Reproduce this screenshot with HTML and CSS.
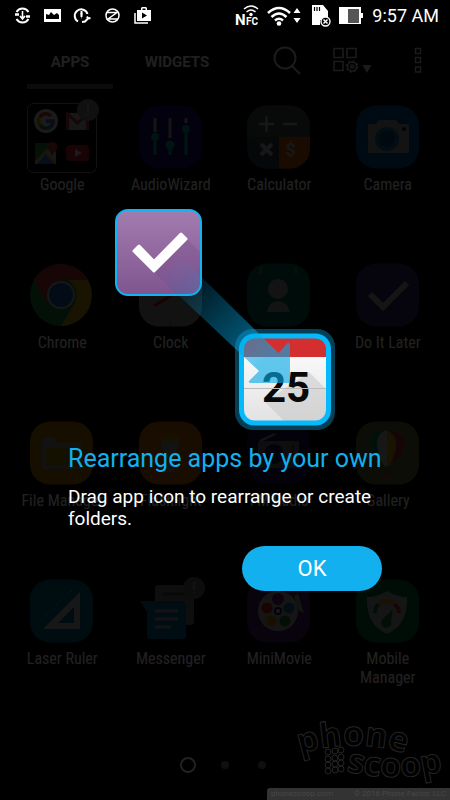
FILE: index.html
```html
<!DOCTYPE html>
<html lang="en">
<head>
<meta charset="utf-8">
<meta name="viewport" content="width=device-width, initial-scale=1">
<title>Apps</title>
<link rel="stylesheet" href="styles.css">
</head>
<body>
<div class="phone">
  <header class="status">
    <div class="status-left">
      <svg width="20" height="20" viewBox="0 0 20 20" fill="none" stroke="#fff" stroke-width="2"><path d="M4.500 6a7 7 0 0 1 12 0M16.500 13a7 7 0 0 1-12 0"/><path d="M10.500 5v8M8 10l2.500 3 2.500-3" stroke-width="1.600"/><path d="M3 8.500h4M14 10.500h4" stroke-width="2.500"/></svg>
      <svg width="20" height="20" viewBox="0 0 20 20"><path fill="#fff" fill-rule="evenodd" d="M2 3h17v13H2zM4 13h13V9l-2-2-3 2-3-3-2 3-3-1z"/></svg>
      <svg width="20" height="20" viewBox="0 0 20 20" fill="none" stroke="#fff" stroke-width="2"><path d="M6 15.500A6.500 6.500 0 1 1 15.500 8M9.500 5v6M10 16l3-.5 3-3M15 10.500l1 2 2.500-.5"/><path d="M8.500 7h2l-1 6z" fill="#fff" stroke="none"/></svg>
      <svg width="20" height="20" viewBox="0 0 20 20" fill="none" stroke="#fff" stroke-width="1.500"><circle cx="10.500" cy="9.500" r="6.500"/><path d="M5 6.500h10L6 13h10"/></svg>
      <svg width="20" height="20" viewBox="0 0 20 20"><path fill="#fff" fill-rule="evenodd" d="M5 4h4V2l1-1h4l1 1v2h4v11H5zM10.500 4h3V2.500h-3zM10 6.500v6l5-3z"/><path d="M3 7v10h13" fill="none" stroke="#fff" stroke-width="1.500"/></svg>
    </div>
    <div class="status-right">
      <svg width="24" height="24" viewBox="0 0 24 24"><text x="0" y="21" class="nfc-n">N</text><text x="11" y="21" class="nfc-fc">FC</text><g fill="none" stroke="#fff" stroke-width="1.500"><path d="M9 5q7-6 14 0M11.500 8q4.500-4 9 0"/></g><circle cx="16" cy="10.500" r="1.700" fill="#fff"/></svg>
      <svg width="36" height="24" viewBox="0 0 36 24"><g fill="none" stroke="#fff" stroke-width="2.500"><path d="M1 9q11-10 22 0M4.500 13q7.500-7 15 0M8 16.500q4-3.500 8 0"/></g><circle cx="12" cy="19.500" r="2.300" fill="#fff"/><path fill="#fff" d="m30 4 3.500 5h-7zM26.500 14h7L30 19z"/></svg>
      <svg width="20" height="24" viewBox="0 0 20 24"><path fill="#fff" d="M1 1h11l5 6v9H9v5H1z"/><path stroke="#000" stroke-width="1.200" d="M3.500 3v4M6 3v4M8.500 3v4"/><circle cx="14.500" cy="17.500" r="4.500" fill="#000" stroke="#fff" stroke-width="1.400"/><path stroke="#fff" stroke-width="1.500" d="m12.500 15.500 4 4m0-4-4 4"/></svg>
      <svg width="25" height="24" viewBox="0 0 25 24"><path fill="#fff" d="M0 3h22v6h2v5h-2v6H0z"/><path fill="#555" d="M9 5h11v14H9z"/></svg>
      <span class="time">9:57 AM</span>
    </div>
  </header>

  <div class="bar">
    <nav class="tabs">
      <a class="tab tab-on" href="#apps">APPS</a>
      <a class="tab" href="#widgets">WIDGETS</a>
    </nav>
    <div class="tools">
      <button class="tool" type="button" aria-label="Search"><svg width="30" height="30" viewBox="0 0 30 30" fill="none" stroke="#fff" stroke-width="2"><circle cx="13" cy="12" r="10.500"/><path d="m20 20 8 8"/></svg></button>
      <button class="tool" type="button" aria-label="Layout"><svg width="41" height="30" viewBox="0 0 41 30" fill="none" stroke="#fff" stroke-width="1.600"><path d="M2 2.500h9v9H2zM15 2.500h9v9h-9zM2 15.500h9v9H2z"/><circle cx="20" cy="20.500" r="4.500"/><circle cx="20" cy="20.500" r="1.500"/><circle cx="20" cy="20.500" r="5.500" stroke-dasharray="2 2.320"/><path fill="#fff" stroke="none" d="M30.500 19h9L35 27z"/></svg></button>
      <button class="tool" type="button" aria-label="More"><svg width="10" height="30" viewBox="0 0 10 30" fill="none" stroke="#fff" stroke-width="1.500"><path d="M2.500 2.500h5v5h-5zM2.500 11.500h5v5h-5zM2.500 21h5v5h-5z"/></svg></button>
    </div>
  </div>

  <main class="grid" id="apps">
    <button class="app" type="button"><svg class="icon" viewBox="0 0 64 64"><rect x="-2.500" y="-1.500" width="69" height="69" rx="6" fill="none" stroke="#aaa"/><circle cx="16" cy="16" r="12" fill="#fff"/><g fill="none" stroke-width="3.500"><path stroke="#ea4335" d="M10 12a7 7 0 0 1 11-1"/><path stroke="#fbbc05" d="M10 12a7 7 0 0 0 0 8"/><path stroke="#34a853" d="M10 20a7 7 0 0 0 10 2"/><path stroke="#4285f4" d="M20 22q3-2 3-6h-7"/></g><rect x="36" y="8" width="23" height="17" rx="1" fill="#ddd"/><path d="M37.500 25V9l10 9 10-9v16" fill="none" stroke="#e53935" stroke-width="3"/><path fill="#34a853" d="M5 38h21v21H5z"/><path fill="#ddd" d="m5 56 14-15 7 7v11H5z"/><path fill="#4285f4" d="m7 59 9-10 9 10z"/><path stroke="#fbc02d" stroke-width="2" d="m5 57 18-18m-8 9 11 11"/><path fill="#ea4335" d="M22 53q0-5-4-9a5 5 0 1 1 9 0q-5 4-5 9"/><rect x="36" y="40" width="23" height="16" rx="4" fill="#e52d27"/><path fill="#fff" d="m45 44 7 4-7 4z"/><circle cx="58" cy="5" r="11" fill="#999"/><path d="M58-1v8m0 2v2" stroke="#ddd" stroke-width="1.500"/></svg><span class="label">Google</span></button>
    <button class="app" type="button"><svg class="icon" viewBox="0 0 64 64"><rect width="63" height="63" y=".5" rx="20" fill="#1c127d"/><g stroke-width="3"><path stroke="#ccc" d="M16 13v14M31 13v20M47 13v5"/><path stroke="#00bfa5" d="M16 31v19M31 42v8M47 25v25"/></g><g fill="#00bfa5"><circle cx="16" cy="32" r="4"/><circle cx="31" cy="40" r="4.500"/><circle cx="47" cy="24" r="4"/></g></svg><span class="label">AudioWizard</span></button>
    <button class="app" type="button"><svg class="icon" viewBox="0 0 64 64"><defs><clipPath id="tile"><rect width="63" height="63" y=".5" rx="20"/></clipPath></defs><g clip-path="url(#tile)"><path fill="#536064" d="M0 0h64v64H0z"/><path fill="#ef6c00" d="M32 32h32v32H32z"/><path fill="#3f4b50" d="M0 32h32v32H0z"/></g><path stroke="#ddd" stroke-width="2.600" d="M12 19h15m-7.500-7.500v15M36 19h14"/><path stroke="#ddd" stroke-width="4" d="m14 39 11 11m0-11L14 50"/><text x="38" y="51" class="dollar">$</text></svg><span class="label">Calculator</span></button>
    <button class="app" type="button"><svg class="icon" viewBox="0 0 64 64"><rect width="63" height="63" y=".5" rx="20" fill="#0864af"/><path fill="#bbb" d="M12 19h8l3-4h17l3 4h8q2 0 2 2v27H12V21z"/><circle cx="31" cy="34" r="12" fill="#1782bd"/><circle cx="31" cy="34" r="8" fill="#07549b"/><circle cx="48" cy="24" r="2" fill="#123"/></svg><span class="label">Camera</span></button>

    <button class="app" type="button"><svg class="icon" viewBox="0 0 64 64"><circle cx="31" cy="32" r="31" fill="#179b4a"/><path fill="#dc3c31" d="M4 17a31 31 0 0 1 54 0H31L17 40z"/><path fill="#e9bd12" d="M58 17a31 31 0 0 1-27 46l14-23q5-15-7-23z"/><circle cx="31" cy="32" r="14" fill="#ddd"/><circle cx="31" cy="32" r="12" fill="#2670d5"/></svg><span class="label">Chrome</span></button>
    <button class="app" type="button"><svg class="icon" viewBox="0 0 64 64"><rect width="63" height="63" y=".5" rx="20" fill="#aab3b0"/><path stroke="#f20b24" stroke-width="3" d="m15 43 18-11"/><path stroke="#777" d="M31 58v5M0 32h3M60 32h3"/></svg><span class="label">Clock</span></button>
    <button class="app" type="button"><svg class="icon" viewBox="0 0 64 64"><rect width="63" height="63" y=".5" rx="20" fill="#08745e"/><path stroke="#499783" stroke-width="3" d="M14 4v7M49 4v7"/><circle cx="31" cy="26" r="10" fill="#bbb"/><path fill="#bbb" d="M20 49q2-11 11-11t12 11z"/></svg><span class="label">Contacts</span></button>
    <button class="app" type="button"><svg class="icon" viewBox="0 0 64 64"><rect width="63" height="63" y=".5" rx="20" fill="#3b2e72"/><path fill="none" stroke="#ccc" stroke-width="6" d="m14 31 13 13 24-24"/></svg><span class="label">Do It Later</span></button>

    <button class="app" type="button"><svg class="icon" viewBox="0 0 64 64"><rect width="63" height="63" y=".5" rx="20" fill="#d79200"/><path fill="#aaa" d="M12 18q0-2 2-2h10l3 6h22q2 0 2 2v24H14q-2 0-2-2z"/><path fill="#c5a90b" d="M16 27h33v18H16z"/></svg><span class="label">File Manager</span></button>
    <button class="app" type="button"><svg class="icon" viewBox="0 0 64 64"><rect width="63" height="63" y=".5" rx="20" fill="#e87b00"/><path fill="#ddaf00" d="M22 14h19v6H22z"/><path fill="#bbb" d="M22 20h19q-1 8-5 11v20H26V31q-4-4-4-11"/></svg><span class="label">Flashlight</span></button>
    <button class="app" type="button"><svg class="icon" viewBox="0 0 64 64"><rect width="63" height="63" y=".5" rx="20" fill="#24176a"/><path stroke="#bbb" stroke-width="2" d="m13 20 15-7"/><rect x="11" y="20" width="41" height="27" rx="2" fill="#888"/><circle cx="27" cy="33" r="10" fill="#26205e"/><path stroke="#d22" stroke-width="2" d="M46 24v13"/></svg><span class="label">FM Radio</span></button>
    <button class="app" type="button"><svg class="icon" viewBox="0 0 64 64"><rect width="63" height="63" y=".5" rx="20" fill="#817f45"/><path fill="#06a66c" d="M31 10c-23-2-21 20-3 34-9-22-7-28 3-34"/><path fill="#ddd" d="M31 9c-16 5-9 25-3 36h3z"/><path fill="#f1c400" d="M31 9c13 5 12 25 3 36h-3z"/><path fill="#d62e42" d="M31 9c26 1 19 25 3 35 10-20 8-28-3-35"/><path fill="#a75a16" d="M27 50h8v6h-8z"/></svg><span class="label">Gallery</span></button>

    <button class="app" type="button"><svg class="icon" viewBox="0 0 64 64"><rect width="63" height="63" y=".5" rx="20" fill="#087d9b"/><path fill="#ddd" fill-rule="evenodd" d="M50 13v37H13zm-6 15v16H28z"/><path stroke="#25b3d4" stroke-width="2" stroke-dasharray="2 3" d="m12 41 31-31"/></svg><span class="label">Laser Ruler</span></button>
    <button class="app" type="button"><svg class="icon" viewBox="0 0 64 64"><rect x="16" y="6" width="39" height="40" rx="3" fill="#888"/><path stroke="#555" stroke-width="3" d="M24 15h24"/><path fill="#087eb9" d="M1 22h42q4 0 4 4v31q0 3-4 3H12q-4 0-4-3V33z"/><path stroke="#bbb" stroke-width="3" d="M16 32h23M16 40h23M16 48h16"/><circle cx="55" cy="9" r="11" fill="#777"/><path d="M55 3v8m0 2v2" stroke="#ccc" stroke-width="1.500"/></svg><span class="label">Messenger</span></button>
    <button class="app" type="button"><svg class="icon" viewBox="0 0 64 64"><rect width="63" height="63" y=".5" rx="20" fill="#541d72"/><path fill="#bbb" d="m47 17 4-2 6 19-5-2z"/><circle cx="31" cy="32" r="20" fill="#ccc"/><circle cx="31" cy="20" r="6" fill="#8b238e"/><circle cx="20" cy="29" r="5.500" fill="#dd2e23"/><circle cx="42" cy="29" r="5.500" fill="#1786c5"/><circle cx="24" cy="42" r="5.500" fill="#e99c0c"/><circle cx="38" cy="42" r="5.500" fill="#21963c"/><circle cx="31" cy="32" r="3" fill="#eee" stroke="#1c1c63" stroke-width="2"/></svg><span class="label">MiniMovie</span></button>
    <button class="app" type="button"><svg class="icon" viewBox="0 0 64 64"><rect width="63" height="63" y=".5" rx="20" fill="#087c3c"/><path fill="#ccc" d="M31 12q10 6 20 6 1 28-20 37Q10 46 11 18q10 0 20-6"/><g fill="none" stroke-width="4"><path stroke="#16964d" d="M19 34q0-6 4-9"/><path stroke="#edac12" d="M24 24q7-4 13 0"/><path stroke="#e53935" d="M38 25q5 3 5 9"/></g><path fill="#16964d" d="m37 30-2 12a5 5 0 1 1-8-2z"/></svg><span class="label">Mobile Manager</span></button>
  </main>

  <nav class="pages" aria-label="Pages">
    <span class="page page-on"></span><span class="page"></span><span class="page"></span>
  </nav>

  <section class="tip" role="dialog" aria-labelledby="tip-title">
    <svg class="drag" width="220" height="222" viewBox="0 0 220 222" aria-hidden="true">
      <defs>
        <linearGradient id="purple" x2="0" y2="1"><stop stop-color="#a37caf"/><stop offset="1" stop-color="#7f558f"/></linearGradient>
        <linearGradient id="beam" gradientUnits="userSpaceOnUse" x1="55" y1="55" x2="150" y2="150"><stop stop-color="#04a9e6" stop-opacity="0"/><stop offset="1" stop-color="#04a9e6" stop-opacity=".62"/></linearGradient>
        <linearGradient id="paper" x2="0" y2="1"><stop stop-color="#fff"/><stop offset="1" stop-color="#e2e2e2"/></linearGradient>
        <clipPath id="cal"><rect x="128" y="129" width="84" height="84" rx="10"/></clipPath>
        <clipPath id="task"><rect x="1" y="1" width="85" height="85" rx="12"/></clipPath>
      </defs>
      <rect x="1" y="1" width="85" height="85" rx="12" fill="url(#purple)"/>
      <path clip-path="url(#task)" fill="#704583" opacity=".25" d="m39 63 33-33 20 20v40H66z"/>
      <rect x="1" y="1" width="85" height="85" rx="12" fill="none" stroke="#12b3f2" stroke-width="2"/>
      <rect x="120" y="120" width="100" height="101" rx="18" fill="#043f58"/>
      <g clip-path="url(#cal)">
        <path fill="url(#paper)" d="M128 129h84v84h-84z"/>
        <path fill="#d32f2f" d="M128 129h84v19h-84z"/>
        <path fill="#bbb" opacity=".4" d="m194 163 20 20v32h-42l-22-22z"/>
        <text x="147" y="193" class="day">25</text>
        <path stroke="#bbb" d="M128 179.500h84"/>
      </g>
      <rect x="126.500" y="127" width="87" height="87" rx="13" fill="none" stroke="#05b9fa" stroke-width="5"/>
      <path fill="url(#beam)" d="M39 63 62 44 163.500 144l9-10q2-1 2.500 2v38h-39q-3 0-2-2l10-10z"/>
      <path fill="#fff" stroke="#fff" stroke-width="3" stroke-linejoin="round" d="m19 42 5-5 15 15.500L66 25l5 5-32 32z"/>
    </svg>
    <div class="tip-text">
      <h1 class="tip-title" id="tip-title">Rearrange apps by your own</h1>
      <p class="tip-body">Drag app icon to rearrange or create folders.</p>
      <button class="ok" type="button">OK</button>
    </div>
  </section>

  <footer class="credit">
    <svg class="mark" width="148" height="68" viewBox="0 0 148 68">
      <defs><path id="arc-a" d="M-2 38Q52 20 112 40"/><path id="arc-b" d="M44 55Q95 68 150 53"/></defs>
      <g class="mark-text"><text><textPath href="#arc-a">phone</textPath></text><text><textPath href="#arc-b">scoop</textPath></text></g>
      <g fill="none" stroke="#242424"><circle cx="26" cy="36" r="3"/><circle cx="33" cy="35" r="3"/><circle cx="39" cy="34" r="3"/><circle cx="26" cy="43" r="3"/><circle cx="33" cy="42" r="3"/><circle cx="39" cy="41" r="3"/><circle cx="26" cy="49" r="3"/><circle cx="33" cy="48" r="3"/><circle cx="39" cy="47" r="3"/><circle cx="26" cy="55" r="3"/><circle cx="33" cy="54" r="3"/><circle cx="39" cy="53" r="3"/></g>
    </svg>
    <small class="legal"><span>phonescoop.com</span><span>© 2016 Phone Factor, LLC</span></small>
  </footer>
</div>
</body>
</html>
```
FILE: styles.css
```css
* { box-sizing: border-box; }
body { margin: 0; background: #000; color: #fff; font-family: Roboto, "Noto Sans", sans-serif; }
button { margin: 0; padding: 0; border: 0; background: none; color: inherit; font: inherit; }
svg { display: block; flex: none; }

.phone { position: relative; min-height: 100vh; overflow: hidden; }

.status { position: relative; z-index: 2; display: flex; justify-content: space-between; align-items: center; height: 32px; padding: 0 11px 0 12px; }
.status-left { display: flex; gap: 10px; }
.status-right { display: flex; align-items: center; gap: 8px; }
.time { font-size: 18px; line-height: 24px; }
.nfc-n { font: 700 15px Roboto, sans-serif; fill: #fff; }
.nfc-fc { font: 700 10px Roboto, sans-serif; fill: #fff; }

.bar { display: flex; justify-content: space-between; height: 57px; padding: 0 27px; }
.tabs { display: flex; gap: 21px; }
.tab { width: 86px; padding-top: 20px; border-bottom: 5px solid transparent; color: #eee; font-size: 15px; font-weight: 700; line-height: 20px; text-align: center; text-decoration: none; }
.tab-on { border-bottom-color: #555; }
.tools { display: flex; align-items: center; gap: 30px; }
.tool { opacity: 0.8; }
.tool:last-child { margin-left: 10px; }

.grid { display: grid; grid-template-columns: repeat(4, 1fr); grid-auto-rows: 158px; padding: 16px 8px 0; }
.app { display: flex; flex-direction: column; align-items: center; gap: 6px; }
.icon { width: 64px; height: 64px; overflow: visible; opacity: 0.8; }
.label { max-width: 84px; font-family: "Roboto Condensed", Roboto, sans-serif; font-size: 16px; line-height: 19px; text-align: center; }
.dollar { font: 700 19px Roboto, sans-serif; fill: #ddd; }

.pages { display: flex; justify-content: center; align-items: center; gap: 21px; height: 56px; }
.page { width: 16px; height: 16px; border: 4px solid transparent; border-radius: 50%; background: #777; background-clip: padding-box; }
.page-on { border: 2px solid #fff; background: none; }

.tip { position: absolute; inset: 0; display: flex; flex-direction: column; align-items: center; gap: 13px; padding-top: 209px; background: rgba(0, 0, 0, 0.87); }
.tip-text { display: flex; flex-direction: column; width: 100%; padding: 0 68px; }
.tip-title { margin: 0 0 12px; color: #12b0ee; font-size: 25px; font-weight: 400; line-height: 30px; white-space: nowrap; }
.tip-body { margin: 0 0 16px; font-size: 19px; line-height: 22px; }
.ok { align-self: flex-end; width: 140px; height: 45px; border-radius: 23px; background: #12b0ee; font-size: 22px; }
.day { font: 700 42px Roboto, sans-serif; fill: #090909; }

.credit { position: absolute; right: 0; bottom: 0; display: flex; flex-direction: column; align-items: flex-end; gap: 4px; }
.mark { overflow: visible; }
.mark-text { font: 700 34px "Open Sans", sans-serif; fill: #000; stroke: #242424; }
.legal { display: flex; justify-content: space-between; gap: 8px; width: 183px; padding: 0 4px; border-top-left-radius: 3px; background: #333; color: #484848; font-size: 8px; line-height: 12px; white-space: nowrap; }
```
